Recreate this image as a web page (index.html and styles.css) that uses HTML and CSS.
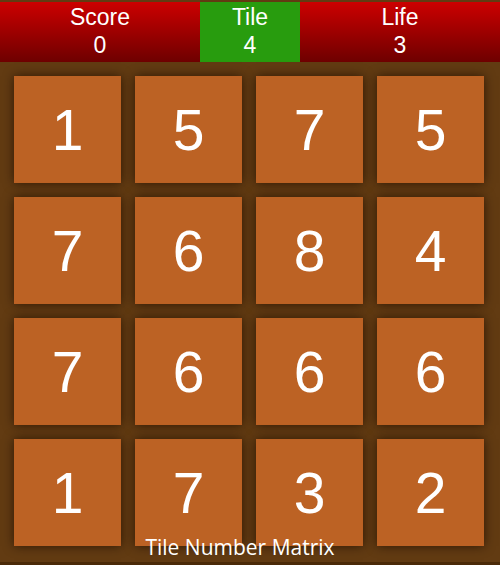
FILE: index.html
```html
<!DOCTYPE html>
<html>
<head>
<meta charset="utf-8">
<link rel="stylesheet" href="styles.css">
</head>
<body>
<div class="page">
  <header class="bar">
    <div class="stat stat-red stat-wide"><span>Score</span><span>0</span></div>
    <div class="stat stat-green"><span>Tile</span><span>4</span></div>
    <div class="stat stat-red stat-wide"><span>Life</span><span>3</span></div>
  </header>
  <main class="board">
    <div class="grid">
      <div class="tile">1</div><div class="tile">5</div><div class="tile">7</div><div class="tile">5</div>
      <div class="tile">7</div><div class="tile">6</div><div class="tile">8</div><div class="tile">4</div>
      <div class="tile">7</div><div class="tile">6</div><div class="tile">6</div><div class="tile">6</div>
      <div class="tile">1</div><div class="tile">7</div><div class="tile">3</div><div class="tile">2</div>
    </div>
    <div class="caption">Tile Number Matrix</div>
  </main>
</div>
</body>
</html>
```
FILE: styles.css
```css
html { background: #4b2a08; }
body { margin: 0; }
.page {
  width: 500px;
  background: #623b12;
  padding-top: 2px;
}
.bar {
  display: flex;
  height: 60px;
}
.stat {
  display: flex;
  flex-direction: column;
  align-items: center;
  justify-content: center;
  color: #fff;
  font-family: "Liberation Sans", Arial, sans-serif;
  font-size: 23px;
  line-height: 28px;
  padding-bottom: 2px;
  box-sizing: border-box;
}
.stat-wide { width: 200px; }
.stat-green { width: 100px; background: #289c0e; }
.stat-red { background: linear-gradient(#cc0000, #6e0000); }
.board {
  position: relative;
  height: 500px;
}
.grid {
  display: grid;
  grid-template-columns: repeat(4, 107px);
  grid-auto-rows: 107px;
  gap: 14px;
  padding: 14px;
}
.tile {
  background: #bc6224;
  box-shadow: 0 0 10px rgba(30, 12, 0, 0.75);
  display: flex;
  align-items: center;
  justify-content: center;
  color: #fff;
  font-family: "Liberation Sans", Arial, sans-serif;
  font-size: 57px;
}
.caption {
  position: absolute;
  left: 0;
  width: 480px;
  top: 471px;
  text-align: center;
  color: #fff;
  font-family: "Open Sans", sans-serif;
  font-size: 21px;
  line-height: 28px;
}
```
